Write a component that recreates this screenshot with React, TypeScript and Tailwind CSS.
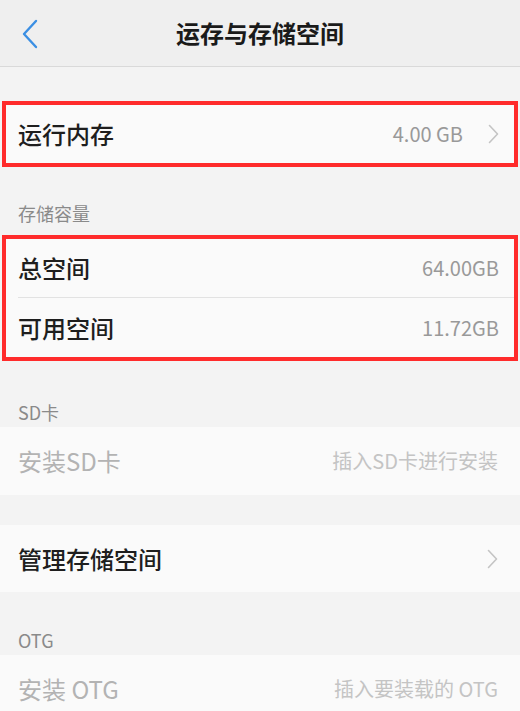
import React from "react";

const font = { fontFamily: '"Noto Sans CJK SC", "Noto Sans", Roboto, sans-serif' };

function Chevron() {
  return (
    <svg width="11" height="20" viewBox="0 0 11 20" fill="none" className="shrink-0">
      <path d="M1.5 1.5 L9.5 10 L1.5 18.5" stroke="#c4c4c4" strokeWidth="1.6" strokeLinecap="round" strokeLinejoin="round" />
    </svg>
  );
}

function Row({
  label,
  value,
  chevron,
  disabled,
  className = "",
}: {
  label: string;
  value?: string;
  chevron?: boolean;
  disabled?: boolean;
  className?: string;
}) {
  return (
    <div className={`flex items-center justify-between bg-[#fafafa] ${className}`}>
      <span className={`text-[24px] leading-none ${disabled ? "text-[#b3b3b3]" : "font-medium text-[#1e1e1e]"}`}>{label}</span>
      <div className="flex items-center gap-[25px]">
        {value && (
          <span className={`text-[20px] leading-none ${disabled ? "text-[#c4c4c4]" : "text-[#999999]"}`}>
            {value}
          </span>
        )}
        {chevron && <Chevron />}
      </div>
    </div>
  );
}

function SectionLabel({ children, className = "" }: { children: React.ReactNode; className?: string }) {
  return (
    <div className={`flex items-end px-[18px] text-[18px] leading-none text-[#8a8a8a] ${className}`}>
      <span>{children}</span>
    </div>
  );
}

export default function App() {
  return (
    <div className="h-[711px] w-[520px] overflow-hidden bg-[#f3f3f3]" style={font}>
      <header className="relative flex h-[67px] items-center justify-center border-b border-[#d9d9d9] bg-[#efefef]">
        <svg width="18" height="30" viewBox="0 0 18 30" fill="none" className="absolute left-[21px] top-[19px]">
          <path d="M15 2 L3 15 L15 28" stroke="#3b8fe3" strokeWidth="2.4" strokeLinecap="round" strokeLinejoin="round" />
        </svg>
        <h1 className="text-[24px] font-bold leading-none text-[#1a1a1a]">运存与存储空间</h1>
      </header>

      <div className="h-[34px]" />

      <div className="mx-[2px] border-4 border-[#ff2b2b]">
        <Row label="运行内存" value="4.00 GB" chevron className="h-[58px] pl-[12px] pr-[15px]" />
      </div>

      <SectionLabel className="h-[68px] pb-[13px]">存储容量</SectionLabel>

      <div className="mx-[2px] border-4 border-[#ff2b2b] bg-[#fafafa]">
        <Row label="总空间" value="64.00GB" className="h-[58px] pl-[12px] pr-[15px]" />
        <div className="ml-[12px] h-px bg-[#e2e2e2]" />
        <Row label="可用空间" value="11.72GB" className="h-[59px] pl-[12px] pr-[15px]" />
      </div>

      <SectionLabel className="h-[66px] pb-[6px]">SD卡</SectionLabel>
      <Row label="安装SD卡" value="插入SD卡进行安装" disabled className="h-[68px] pl-[18px] pr-[22px]" />

      <div className="h-[30px]" />
      <Row label="管理存储空间" chevron className="h-[67px] pl-[18px] pr-[22px]" />

      <SectionLabel className="h-[63px] pb-[6px]">OTG</SectionLabel>
      <Row label="安装 OTG" value="插入要装载的 OTG" disabled className="h-[68px] pl-[18px] pr-[22px]" />
    </div>
  );
}
